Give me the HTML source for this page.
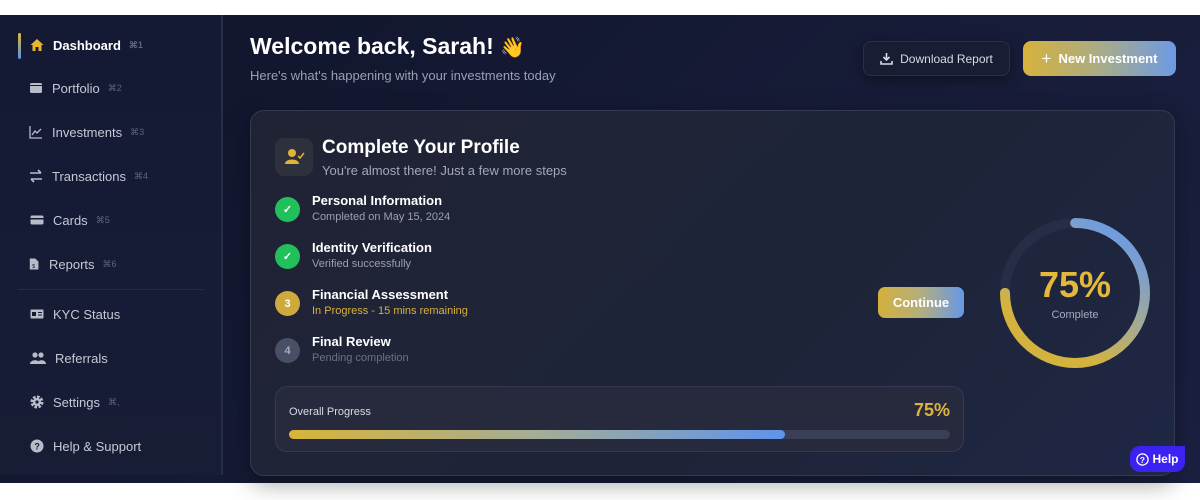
<!DOCTYPE html>
<html><head><meta charset="utf-8"><style>
*{margin:0;padding:0;box-sizing:border-box}
body{width:1200px;height:500px;background:#fff;font-family:"Liberation Sans",sans-serif;position:relative;overflow:hidden}
.app{position:absolute;left:0;top:15px;width:1200px;height:468px;background:linear-gradient(135deg,#10142b,#171c38 60%,#1a2040)}
.side{position:absolute;left:0;top:0;width:223px;height:460px;background:linear-gradient(180deg,#141a34,#181d36);border-right:2px solid #262c4a}
.nav{position:absolute;left:30px;font-size:13px;color:#c5c9d6;display:flex;align-items:center;height:20px}
.nav .ic{width:14px;height:14px;margin-right:9px;display:inline-block}
.nav .k{font-size:9px;color:#5e6479;margin-left:8px}
.act{color:#fff;font-weight:bold}
.bar{position:absolute;left:18px;top:18px;width:3px;height:26px;border-radius:2px;background:linear-gradient(#e0b83a,#5c8ee8)}
.div{position:absolute;left:18px;top:274px;width:186px;height:1px;background:#272c45}
h1{position:absolute;left:250px;top:18px;font-size:23px;color:#fff;font-weight:bold}
.sub{position:absolute;left:250px;top:53px;font-size:13px;color:#98a0b6}
.btn1{position:absolute;left:863px;top:26px;width:147px;height:35px;border-radius:8px;background:#181d33;border:1px solid #2a3049;color:#d7dbe6;font-size:12px;display:flex;align-items:center;justify-content:center;box-shadow:0 4px 12px rgba(0,0,0,.4)}
.btn2{position:absolute;left:1023px;top:26px;width:153px;height:35px;border-radius:8px;background:linear-gradient(90deg,#d6b23c,#a9ac86 50%,#6d9ae6);color:#fff;font-weight:bold;font-size:13px;display:flex;align-items:center;justify-content:center}
.card{position:absolute;left:250px;top:95px;width:925px;height:366px;border-radius:14px;background:linear-gradient(135deg,#202334,#1e2438 60%,#1e2745);border:1px solid #343a52;box-shadow:0 8px 24px rgba(0,0,0,.35)}
.pic{position:absolute;left:24px;top:27px;width:38px;height:38px;border-radius:9px;background:#2e303c}
.ct{position:absolute;left:71px;top:26px;font-size:19px;font-weight:bold;color:#fff}
.cs{position:absolute;left:71px;top:52px;font-size:13px;color:#a2a8b8}
.st{position:absolute;left:24px}
.st .c{position:absolute;left:0;top:2px;width:25px;height:25px;border-radius:50%;display:flex;align-items:center;justify-content:center;font-size:11px;font-weight:bold;color:#fff}
.st .t{position:absolute;left:37px;top:-2px;font-size:13px;font-weight:bold;color:#fff;white-space:nowrap}
.st .d{position:absolute;left:37px;top:16px;font-size:11px;color:#9aa0b0;white-space:nowrap}
.cont{position:absolute;left:627px;top:176px;width:86px;height:31px;border-radius:7px;background:linear-gradient(90deg,#d4b03c,#b3ae7e 50%,#6797e6);color:#fff;font-weight:bold;font-size:13px;display:flex;align-items:center;justify-content:center}
.prog{position:absolute;left:24px;top:275px;width:689px;height:66px;border-radius:12px;background:#272a3c;border:1px solid #353a50}
.help{position:absolute;left:1130px;top:446px;width:55px;height:26px;border-radius:10px 0 10px 10px;background:#3b22f0;color:#fff;font-size:12px;font-weight:bold;display:flex;align-items:center;justify-content:center}
</style></head><body>
<div class="app">
<div class="side">
<div class="bar"></div>
<div class="nav act" style="top:20px"><svg class="ic" viewBox="0 0 14 14"><path d="M7 1L0.5 7H2.5V13H5.5V9H8.5V13H11.5V7H13.5Z" fill="#e6b630"/></svg>Dashboard<span class="k">⌘1</span></div>
<div class="nav" style="top:63px;left:29px"><svg class="ic" viewBox="0 0 14 14"><rect x="1" y="2" width="12" height="10" rx="1.5" fill="#b8bcc8"/><rect x="1" y="4" width="12" height="1" fill="#161b33"/></svg>Portfolio<span class="k">⌘2</span></div>
<div class="nav" style="top:107px;left:29px"><svg class="ic" viewBox="0 0 14 14" fill="none" stroke="#b8bcc8" stroke-width="1.3"><path d="M1 1V13H13"/><path d="M3 10L6 6L8 8L12 4"/></svg>Investments<span class="k">⌘3</span></div>
<div class="nav" style="top:151px;left:29px"><svg class="ic" viewBox="0 0 14 14" fill="none" stroke="#b8bcc8" stroke-width="1.6"><path d="M1 4H12M9 1L12 4M13 10H2M5 13L2 10"/></svg>Transactions<span class="k">⌘4</span></div>
<div class="nav" style="top:195px;left:30px"><svg class="ic" viewBox="0 0 14 14"><rect x="0.5" y="2.5" width="13" height="9" rx="1.5" fill="#b8bcc8"/><rect x="0.5" y="5" width="13" height="1.5" fill="#161b33"/></svg>Cards<span class="k">⌘5</span></div>
<div class="nav" style="top:239px;left:29px"><svg class="ic" viewBox="0 0 14 14" style="width:11px"><path d="M1 0H8L12 4V14H1Z" fill="#b8bcc8"/><text x="4" y="12" font-size="7" fill="#161b33">$</text></svg>Reports<span class="k">⌘6</span></div>
<div class="div"></div>
<div class="nav" style="top:289px;left:30px"><svg class="ic" viewBox="0 0 14 14"><rect x="0.5" y="2.5" width="13" height="9" rx="1" fill="#b8bcc8"/><rect x="2" y="5" width="4" height="4" fill="#161b33"/><rect x="8" y="5" width="4" height="1" fill="#161b33"/><rect x="8" y="7.5" width="4" height="1" fill="#161b33"/></svg>KYC Status</div>
<div class="nav" style="top:333px;left:30px"><svg class="ic" viewBox="0 0 16 14" style="width:16px"><circle cx="5" cy="4" r="2.6" fill="#b8bcc8"/><circle cx="11" cy="4" r="2.6" fill="#b8bcc8"/><path d="M0 13C0 8 10 8 10 13Z" fill="#b8bcc8"/><path d="M7 13C7 8 16 8 16 13Z" fill="#b8bcc8"/></svg>Referrals</div>
<div class="nav" style="top:377px;left:30px"><svg class="ic" viewBox="0 0 14 14"><circle cx="7" cy="7" r="5" fill="none" stroke="#b8bcc8" stroke-width="3" stroke-dasharray="2.5 1.4"/><circle cx="7" cy="7" r="4" fill="#b8bcc8"/><circle cx="7" cy="7" r="1.6" fill="#161b33"/></svg>Settings<span class="k">⌘,</span></div>
<div class="nav" style="top:421px;left:30px"><svg class="ic" viewBox="0 0 14 14"><circle cx="7" cy="7" r="6.5" fill="#b8bcc8"/><text x="4.4" y="10.5" font-size="9" font-weight="bold" fill="#161b33">?</text></svg>Help &amp; Support</div>
</div>
<h1>Welcome back, Sarah! <span style="font-size:20px">👋</span></h1>
<div class="sub">Here's what's happening with your investments today</div>
<div class="btn1"><svg width="13" height="13" viewBox="0 0 13 13" style="margin-right:7px"><path d="M6.5 1V8M3.5 5L6.5 8L9.5 5" stroke="#d7dbe6" stroke-width="1.6" fill="none"/><path d="M1 9V12H12V9" stroke="#d7dbe6" stroke-width="1.6" fill="none"/></svg>Download Report</div>
<div class="btn2"><span style="font-size:17px;font-weight:normal;margin-right:7px">+</span>New Investment</div>
<div class="card">
<div class="pic"><svg width="38" height="38" viewBox="0 0 38 38"><circle cx="17" cy="15" r="4" fill="#e0b437"/><path d="M10 26C10 20 24 20 24 26Z" fill="#e0b437"/><path d="M23 18L25 20L29 15" stroke="#e0b437" stroke-width="1.5" fill="none"/></svg></div>
<div class="ct">Complete Your Profile</div>
<div class="cs">You're almost there! Just a few more steps</div>
<div class="st" style="top:84px"><div class="c" style="background:#22c05a">✓</div><div class="t">Personal Information</div><div class="d">Completed on May 15, 2024</div></div>
<div class="st" style="top:131px"><div class="c" style="background:#22c05a">✓</div><div class="t">Identity Verification</div><div class="d">Verified successfully</div></div>
<div class="st" style="top:178px"><div class="c" style="background:#cfa93c">3</div><div class="t">Financial Assessment</div><div class="d" style="color:#d9b23d">In Progress - 15 mins remaining</div></div>
<div class="st" style="top:225px"><div class="c" style="background:#475066;color:#aab">4</div><div class="t">Final Review</div><div class="d" style="color:#6c7285">Pending completion</div></div>
<div class="cont">Continue</div>
<svg style="position:absolute;left:746px;top:104px" width="156" height="156" viewBox="0 0 156 156">
<defs><linearGradient id="g" gradientUnits="userSpaceOnUse" x1="110" y1="10" x2="30" y2="130"><stop offset="0" stop-color="#6e9be0"/><stop offset="0.5" stop-color="#a9ab8e"/><stop offset="0.85" stop-color="#d4b23e"/></linearGradient></defs>
<circle cx="78" cy="78" r="70" fill="none" stroke="#272c47" stroke-width="10"/>
<circle cx="78" cy="78" r="70" fill="none" stroke="url(#g)" stroke-width="10" stroke-linecap="round" stroke-dasharray="329.9 109.9" stroke-dashoffset="109.9"/>
<text x="78" y="82" text-anchor="middle" font-family="Liberation Sans" font-weight="bold" font-size="36" fill="#e4b83a">75%</text>
<text x="78" y="103" text-anchor="middle" font-family="Liberation Sans" font-size="11" fill="#a5abbb">Complete</text>
</svg>
<div class="prog">
<div style="position:absolute;left:13px;top:19px;font-size:11px;color:#d8dbe4">Overall Progress</div>
<div style="position:absolute;right:13px;top:13px;font-size:18px;font-weight:bold;color:#dcb43c">75%</div>
<div style="position:absolute;left:13px;top:43px;width:661px;height:9px;border-radius:5px;background:#3a3f58"></div>
<div style="position:absolute;left:13px;top:43px;width:496px;height:9px;border-radius:5px;background:linear-gradient(90deg,#d8b43a,#a4ad96 50%,#5f94ec)"></div>
</div>
</div>
</div>
<div class="help"><svg width="13" height="13" viewBox="0 0 13 13" style="margin-right:3px"><circle cx="6.5" cy="6.5" r="5.6" fill="none" stroke="#fff" stroke-width="1.3"/><text x="3.8" y="10" font-size="8.5" font-weight="bold" fill="#fff" font-family="Liberation Sans">?</text></svg>Help</div>
</body></html>
